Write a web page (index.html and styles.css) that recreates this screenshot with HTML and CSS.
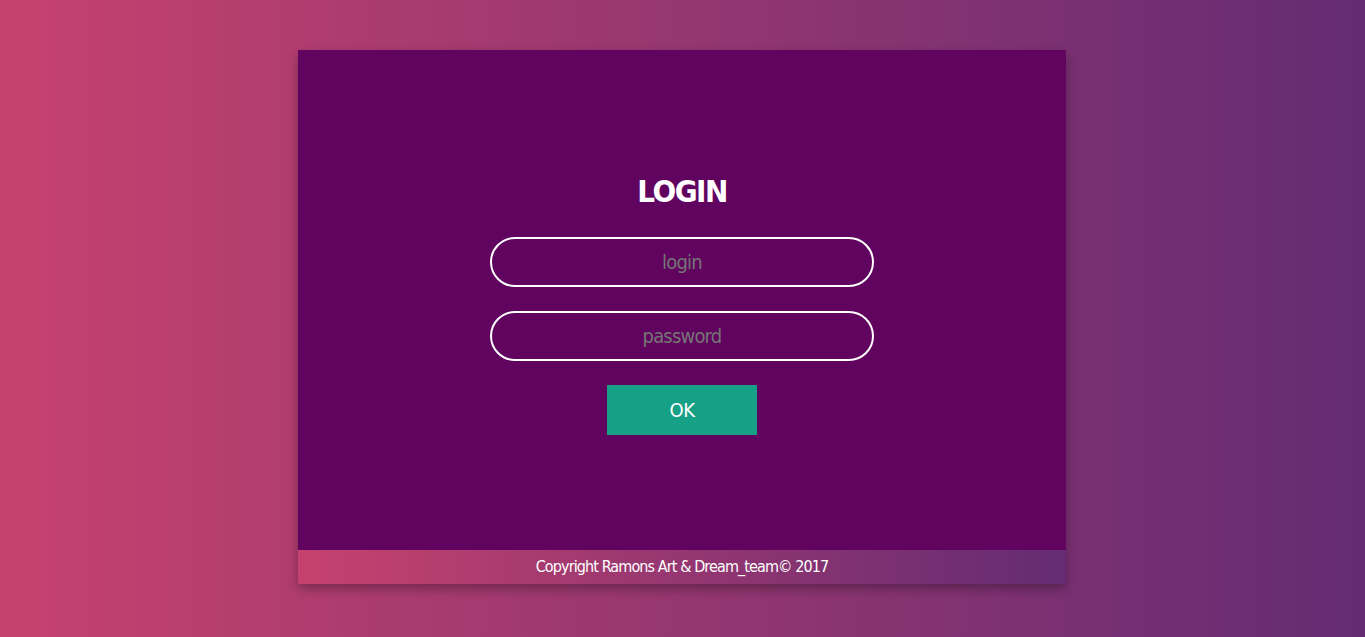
FILE: index.html
```html
<!DOCTYPE html>
<html lang="en">
<head>
<meta charset="utf-8">
<title>Login</title>
<link rel="stylesheet" href="styles.css">
</head>
<body>
  <div class="card">
    <form class="panel">
      <h1 class="title">LOGIN</h1>
      <input class="field" type="text" placeholder="login">
      <input class="field" type="password" placeholder="password">
      <button class="ok" type="button">OK</button>
    </form>
    <footer class="footer">Copyright Ramons Art &amp; Dream_team© 2017</footer>
  </div>
</body>
</html>
```

FILE: styles.css
```css
html, body {
  margin: 0;
  padding: 0;
}
body {
  height: 637px;
  box-sizing: border-box;
  padding-top: 50px;
  padding-right: 1px;
  background: linear-gradient(to right, #c6426e, #642b73);
  font-family: "DejaVu Sans Condensed", "DejaVu Sans", sans-serif;
  font-stretch: condensed;
}
.card {
  width: 768px;
  margin: 0 auto;
  box-shadow: 0 5px 10px rgba(0, 0, 0, 0.3);
}
.panel {
  height: 500px;
  box-sizing: border-box;
  padding-top: 121px;
  background: #61045f;
  display: flex;
  flex-direction: column;
  align-items: center;
  margin: 0;
}
.title {
  margin: 0 0 26px;
  font-size: 31px;
  line-height: 40px;
  font-weight: 700;
  letter-spacing: -1.5px;
  color: #fff;
}
.field {
  width: 384px;
  height: 50px;
  box-sizing: border-box;
  border: 2px solid #fff;
  border-radius: 25px;
  background: transparent;
  color: #fff;
  text-align: center;
  font-family: inherit;
  font-stretch: condensed;
  font-size: 20px;
  letter-spacing: -0.8px;
  margin: 0 0 24px;
  outline: none;
}
.field::placeholder {
  color: #757575;
}
.ok {
  width: 150px;
  height: 50px;
  border: 0;
  background: #16a085;
  color: #fff;
  font-family: inherit;
  font-stretch: condensed;
  font-size: 20px;
  letter-spacing: -0.5px;
  padding: 0;
}
.footer {
  height: 34px;
  line-height: 34px;
  text-align: center;
  color: #fff;
  font-size: 16px;
  letter-spacing: -0.9px;
  background: linear-gradient(to right, #c6426e, #642b73);
}
```
